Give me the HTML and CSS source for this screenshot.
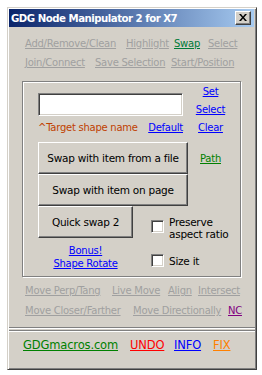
FILE: index.html
```html
<!DOCTYPE html>
<html>
<head>
<meta charset="utf-8">
<link rel="stylesheet" href="styles.css">
</head>
<body>
<div class="window">
  <div class="titlebar">
    <span class="title">GDG Node Manipulator 2 for X7</span>
    <span class="close"><svg width="8" height="7" viewBox="0 0 8 7"><path d="M0 0h2l2 2.5L6 0h2L5 3.5 8 7H6L4 4.5 2 7H0l3-3.5z" fill="#000"/></svg></span>
  </div>
  <div class="content">
    <div class="links top">
      <div class="row">
        <span class="c" style="width:101px"><a class="dis">Add/Remove/Clean</a></span>
        <span class="c" style="width:48px"><a class="dis">Highlight</a></span>
        <span class="c" style="width:34px"><a class="swap">Swap</a></span>
        <span class="c"><a class="dis">Select</a></span>
      </div>
      <div class="row">
        <span class="c" style="width:70px"><a class="dis">Join/Connect</a></span>
        <span class="c" style="width:76px"><a class="dis">Save Selection</a></span>
        <span class="c"><a class="dis">Start/Position</a></span>
      </div>
    </div>

    <div class="group">
      <div class="top-grid">
        <div class="left">
          <div class="input"></div>
          <div class="target-row">
            <span class="target">^Target shape name</span>
            <a class="blue">Default</a>
          </div>
        </div>
        <div class="right">
          <a class="blue">Set</a>
          <a class="blue">Select</a>
          <a class="blue">Clear</a>
        </div>
      </div>
      <div class="btn-row">
        <div class="btn wide">Swap with item from a file</div>
        <div class="right-cell"><a class="green">Path</a></div>
      </div>
      <div class="btn wide">Swap with item on page</div>
      <div class="row3">
        <div class="btn small">Quick swap 2</div>
        <div class="check preserve">
          <span class="box"></span>
          <span class="lbl">Preserve<br>aspect ratio</span>
        </div>
      </div>
      <div class="row4">
        <div class="bonus"><a class="blue">Bonus!</a><br><a class="blue">Shape Rotate</a></div>
        <div class="check sizeit">
          <span class="box"></span>
          <span class="lbl1">Size it</span>
        </div>
      </div>
    </div>

    <div class="links lower">
      <div class="row">
        <span class="c" style="width:87px"><a class="dis">Move Perp/Tang</a></span>
        <span class="c" style="width:56px"><a class="dis">Live Move</a></span>
        <span class="c" style="width:30px"><a class="dis">Align</a></span>
        <span class="c"><a class="dis">Intersect</a></span>
      </div>
      <div class="row">
        <span class="c" style="width:108px"><a class="dis">Move Closer/Farther</a></span>
        <span class="c" style="width:95px"><a class="dis">Move Directionally</a></span>
        <span class="c"><a class="purple">NC</a></span>
      </div>
    </div>

    <div class="sep"></div>
    <div class="sep"></div>

    <div class="footer">
      <span class="c" style="width:107px"><a class="green">GDGmacros.com</a></span>
      <span class="c" style="width:44px"><a class="red">UNDO</a></span>
      <span class="c" style="width:39px"><a class="blue">INFO</a></span>
      <span class="c"><a class="orange">FIX</a></span>
    </div>
  </div>
</div>
</body>
</html>
```

FILE: styles.css
```css
html, body {
  margin: 0;
  padding: 0;
  background: #ffffff;
}
body {
  font-family: "DejaVu Sans", Verdana, sans-serif;
  font-size: 10px;
  letter-spacing: -0.25px;
  color: #000;
}
.window {
  margin: 7px 0 0 7px;
  width: 250px;
  height: 363px;
  box-sizing: border-box;
  background: #d4d0c8;
  border: 1px solid;
  border-color: #d4d0c8 #404040 #404040 #d4d0c8;
  box-shadow: inset 1px 1px 0 #ffffff, inset -1px -1px 0 #808080;
  padding: 1px;
  display: flex;
  flex-direction: column;
}
.titlebar {
  height: 18px;
  background: linear-gradient(to right, #0a246a, #a6caf0);
  display: flex;
  align-items: center;
  justify-content: space-between;
  padding: 0 3px 0 2px;
  margin-right: 1px;
}
.title {
  color: #fff;
  font-weight: bold;
  font-size: 10.2px;
  letter-spacing: -0.5px;
  white-space: nowrap;
}
.close {
  width: 16px;
  height: 14px;
  box-sizing: border-box;
  background: #d4d0c8;
  border: 1px solid;
  border-color: #ffffff #404040 #404040 #ffffff;
  box-shadow: inset -1px -1px 0 #808080;
  display: flex;
  align-items: center;
  justify-content: center;
  padding: 0 1px 1px 0;
}
.close svg { display: block; }
.content {
  flex: 1;
  display: flex;
  flex-direction: column;
}
a {
  text-decoration: underline;
  cursor: pointer;
}
.dis { color: #a0a0a0; }
.swap { color: #007b38; }
.blue { color: #0000ff; }
.green { color: #008000; }
.red { color: #ff0000; }
.orange { color: #ff8000; }
.purple { color: #800080; }
.target { color: #c04000; }

.links .row {
  display: flex;
  white-space: nowrap;
}
.c {
  display: inline-block;
  flex: none;
  white-space: nowrap;
}
.links.top {
  padding: 7px 0 0 16px;
  line-height: 19px;
}
.group {
  margin: 9px 0 0 13px;
  width: 219px;
  height: 196px;
  box-sizing: border-box;
  border: 1px solid #808080;
  box-shadow: inset 1px 1px 0 #ffffff, 1px 1px 0 #ffffff;
  padding-left: 15px;
}
.top-grid {
  display: grid;
  grid-template-columns: 150px 45px;
}
.input {
  margin-top: 11px;
  width: 145px;
  height: 23px;
  box-sizing: border-box;
  background: #fff;
  border: 1px solid;
  border-color: #808080 #ffffff #ffffff #808080;
  box-shadow: inset 1px 1px 0 #404040, inset -1px -1px 0 #d4d0c8;
}
.target-row {
  margin-top: 5px;
  width: 145px;
  display: flex;
  justify-content: space-between;
  line-height: 13px;
  white-space: nowrap;
}
.right {
  padding-top: 1px;
  display: flex;
  flex-direction: column;
  align-items: center;
  line-height: 18px;
}
.btn-row {
  margin-top: 5px;
  display: grid;
  grid-template-columns: 150px 45px;
}
.right-cell {
  display: flex;
  align-items: center;
  justify-content: center;
}
.btn {
  box-sizing: border-box;
  height: 32px;
  background: #d4d0c8;
  border: 1px solid;
  border-color: #ffffff #404040 #404040 #ffffff;
  box-shadow: inset -1px -1px 0 #808080;
  display: flex;
  align-items: center;
  justify-content: center;
  padding-bottom: 1px;
  white-space: nowrap;
  font-size: 10.5px;
}
.btn.wide { width: 150px; }
.btn.small { width: 95px; }
.row3, .row4 {
  display: flex;
  gap: 18px;
}
.check {
  display: flex;
  align-items: flex-start;
  gap: 5px;
}
.box {
  width: 13px;
  height: 13px;
  box-sizing: border-box;
  background: #fff;
  border: 1px solid;
  border-color: #808080 #ffffff #ffffff #808080;
  box-shadow: inset 1px 1px 0 #404040, inset -1px -1px 0 #d4d0c8;
  flex: none;
}
.preserve .box { margin-top: 14px; }
.preserve .lbl {
  margin-top: 10px;
  line-height: 12px;
  font-size: 10.5px;
}
.bonus {
  width: 95px;
  text-align: center;
  margin-top: 4px;
  line-height: 13px;
}
.sizeit {
  margin-top: 11px;
  align-items: center;
}
.lbl1 {
  line-height: 13px;
  font-size: 10.5px;
  padding-top: 1px;
}
.links.lower {
  margin-top: 4px;
  padding-left: 16px;
  line-height: 20px;
}
.sep {
  height: 0;
  border-top: 1px solid #808080;
  border-bottom: 1px solid #ffffff;
  margin-bottom: 1px;
}
.links.lower + .sep { margin-top: 6px; }
.footer {
  margin-top: 5px;
  padding-left: 14px;
  display: flex;
  line-height: 14px;
  font-size: 11.5px;
  letter-spacing: -0.15px;
}
```
